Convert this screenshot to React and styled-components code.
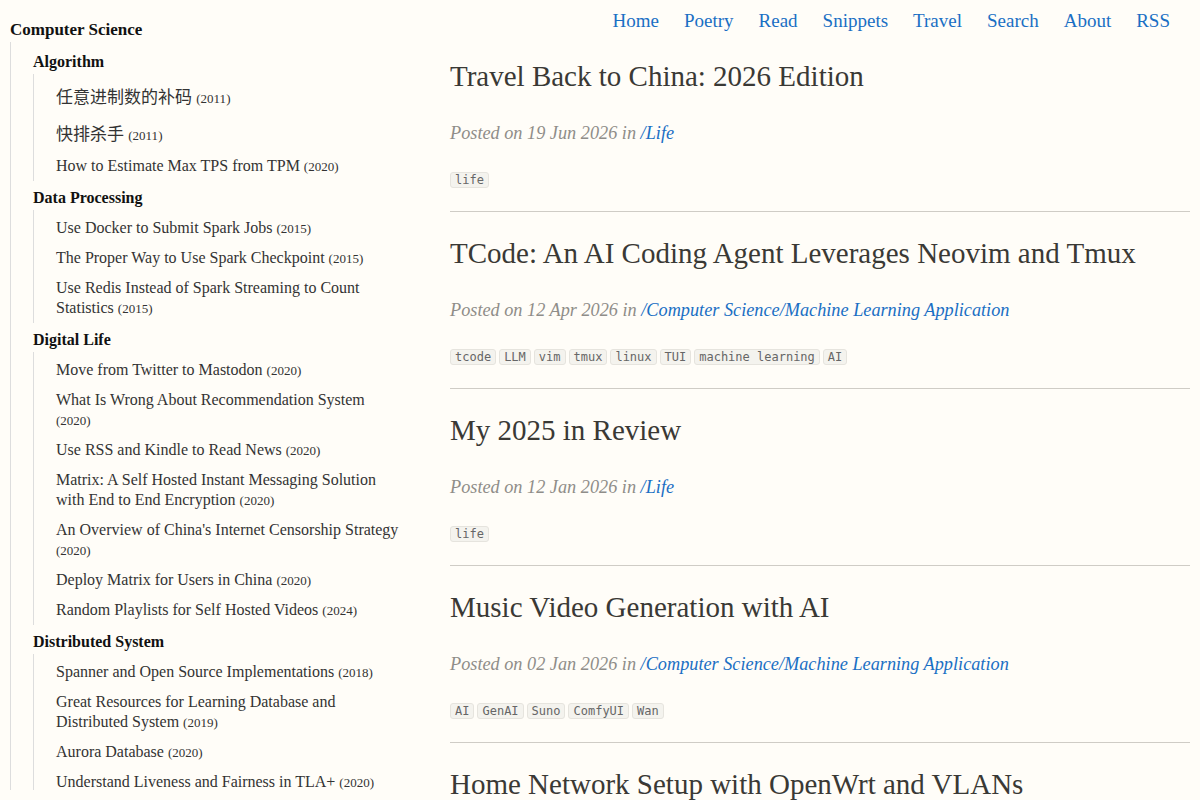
import styled, { createGlobalStyle } from "styled-components";

const GlobalStyle = createGlobalStyle`
    html, body {
        margin: 0;
        padding: 0;
        background: #fffdf8;
    }
    body {
        font-family: "Liberation Serif", "Noto Sans CJK SC", serif;
        color: #333;
    }
    a {
        text-decoration: none;
    }
`;

const Page = styled.div`
    display: grid;
    grid-template-columns: 391px 1fr;
    column-gap: 49px;
    padding: 0 10px;
`;

const Sidebar = styled.aside`
    position: sticky;
    top: 0;
    height: 790px;
    overflow: hidden;
    padding-top: 18px;
    box-sizing: border-box;
`;

const RootTitle = styled.div`
    font-size: 17px;
    font-weight: bold;
    line-height: 24px;
    color: #111;
`;

const Tree = styled.ul`
    list-style: none;
    margin: 0;
    padding: 3px 0 0 22px;
    border-left: 1px solid #ddd;
    min-height: 800px;
`;

const Category = styled.li`
    margin-top: 5px;
`;

const CategoryTitle = styled.div`
    font-size: 16px;
    font-weight: bold;
    line-height: 24px;
    color: #111;
`;

const Items = styled.ul`
    list-style: none;
    margin: 0;
    padding: 3px 0 0 22px;
    border-left: 1px solid #ddd;
`;

const Item = styled.li`
    padding: ${p => (p.$cjk ? "7px 0 3px" : "5px 0")};
    font-size: ${p => (p.$cjk ? "17px" : "16px")};
    line-height: ${p => (p.$cjk ? "27px" : "20px")};
    color: #333;
`;

const Year = styled.span`
    font-size: 13px;
    line-height: 1;
`;

const Main = styled.main`
    min-width: 0;
`;

const Nav = styled.nav`
    display: flex;
    justify-content: flex-end;
    gap: 25px;
    padding: 8px 20px 0 0;
    line-height: 26px;
`;

const NavLink = styled.a`
    font-size: 19px;
    color: #1a6fc4;
`;

const Post = styled.article`
    padding: 23px 0 23px;
    border-bottom: 1px solid #cfccc6;

    &:first-of-type {
        padding-top: 24px;
    }
`;

const Title = styled.h2`
    margin: 0;
    font-size: 29px;
    font-weight: normal;
    line-height: 36px;
    color: #3a3935;
`;

const Meta = styled.div`
    margin-top: 26px;
    font-size: 18.25px;
    font-style: italic;
    line-height: 26px;
    color: #8f8d89;
`;

const CatLink = styled.a`
    color: #1a6fc4;
`;

const Tags = styled.div`
    display: flex;
    flex-wrap: wrap;
    gap: 3px;
    margin-top: 26px;
`;

const Tag = styled.code`
    font-family: "DejaVu Sans Mono", monospace;
    font-size: 12px;
    line-height: 14px;
    padding: 0 4px;
    color: #666;
    background: #f4f3ee;
    border: 1px solid #e6e4de;
    border-radius: 3px;
`;

const tree = [
    {
        name: "Algorithm",
        items: [
            ["任意进制数的补码", 2011, true],
            ["快排杀手", 2011, true],
            ["How to Estimate Max TPS from TPM", 2020],
        ],
    },
    {
        name: "Data Processing",
        items: [
            ["Use Docker to Submit Spark Jobs", 2015],
            ["The Proper Way to Use Spark Checkpoint", 2015],
            ["Use Redis Instead of Spark Streaming to Count Statistics", 2015],
        ],
    },
    {
        name: "Digital Life",
        items: [
            ["Move from Twitter to Mastodon", 2020],
            ["What Is Wrong About Recommendation System", 2020],
            ["Use RSS and Kindle to Read News", 2020],
            ["Matrix: A Self Hosted Instant Messaging Solution with End to End Encryption", 2020],
            ["An Overview of China's Internet Censorship Strategy", 2020],
            ["Deploy Matrix for Users in China", 2020],
            ["Random Playlists for Self Hosted Videos", 2024],
        ],
    },
    {
        name: "Distributed System",
        items: [
            ["Spanner and Open Source Implementations", 2018],
            ["Great Resources for Learning Database and Distributed System", 2019],
            ["Aurora Database", 2020],
            ["Understand Liveness and Fairness in TLA+", 2020],
        ],
    },
];

const ML = "/Computer Science/Machine Learning Application";

const posts = [
    { title: "Travel Back to China: 2026 Edition", date: "19 Jun 2026", cat: "/Life", tags: ["life"] },
    {
        title: "TCode: An AI Coding Agent Leverages Neovim and Tmux",
        date: "12 Apr 2026",
        cat: ML,
        tags: ["tcode", "LLM", "vim", "tmux", "linux", "TUI", "machine learning", "AI"],
    },
    { title: "My 2025 in Review", date: "12 Jan 2026", cat: "/Life", tags: ["life"] },
    {
        title: "Music Video Generation with AI",
        date: "02 Jan 2026",
        cat: ML,
        tags: ["AI", "GenAI", "Suno", "ComfyUI", "Wan"],
    },
    { title: "Home Network Setup with OpenWrt and VLANs" },
];

const navItems = ["Home", "Poetry", "Read", "Snippets", "Travel", "Search", "About", "RSS"];

export default function App() {
    return <>
        <GlobalStyle />
        <Page>
            <Sidebar>
                <RootTitle>Computer Science</RootTitle>
                <Tree>
                    {tree.map(cat => (
                        <Category key={cat.name}>
                            <CategoryTitle>{cat.name}</CategoryTitle>
                            <Items>
                                {cat.items.map(([title, year, cjk]) => (
                                    <Item key={title} $cjk={cjk}>
                                        {title} <Year>({year})</Year>
                                    </Item>
                                ))}
                            </Items>
                        </Category>
                    ))}
                </Tree>
            </Sidebar>
            <Main>
                <Nav>
                    {navItems.map(n => <NavLink key={n} href="#">{n}</NavLink>)}
                </Nav>
                {posts.map(post => (
                    <Post key={post.title}>
                        <Title>{post.title}</Title>
                        {post.date && <Meta>
                            Posted on {post.date} in <CatLink href="#">{post.cat}</CatLink>
                        </Meta>}
                        {post.tags && <Tags>
                            {post.tags.map(t => <Tag key={t}>{t}</Tag>)}
                        </Tags>}
                    </Post>
                ))}
            </Main>
        </Page>
    </>
}
